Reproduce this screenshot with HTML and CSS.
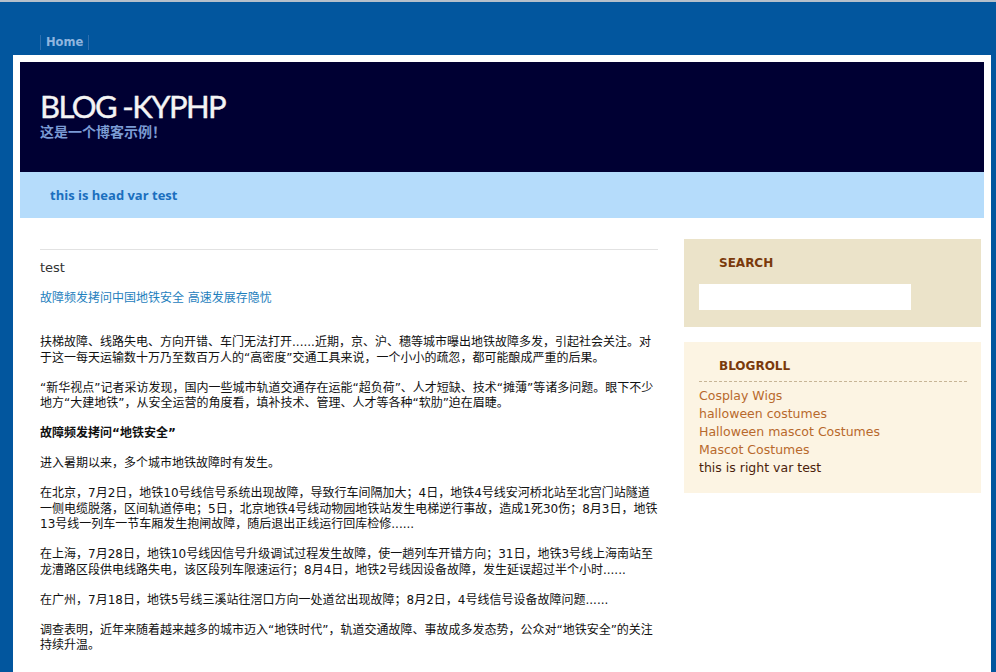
FILE: index.html
```html
<!DOCTYPE html>
<html lang="zh-CN">
<head>
<meta charset="utf-8">
<title>BLOG -KYPHP</title>
<link rel="stylesheet" href="styles.css">
</head>
<body>
<div class="nav">
  <a class="nav-item" href="#">Home</a>
</div>
<div class="wrapper">
  <div class="header">
    <h1 class="site-title">BLOG -KYPHP</h1>
    <div class="site-desc">这是一个博客示例！</div>
  </div>
  <div class="headbar">this is head var test</div>
  <div class="content">
    <div class="main">
      <div class="post-title">test</div>
      <a class="post-link" href="#">故障频发拷问中国地铁安全 高速发展存隐忧</a>
      <div class="post-body">
        <p>扶梯故障、线路失电、方向开错、车门无法打开......近期，京、沪、穗等城市曝出地铁故障多发，引起社会关注。对于这一每天运输数十万乃至数百万人的“高密度”交通工具来说，一个小小的疏忽，都可能酿成严重的后果。</p>
        <p>“新华视点”记者采访发现，国内一些城市轨道交通存在运能“超负荷”、人才短缺、技术“摊薄”等诸多问题。眼下不少地方“大建地铁”，从安全运营的角度看，填补技术、管理、人才等各种“软肋”迫在眉睫。</p>
        <p><strong>故障频发拷问“地铁安全”</strong></p>
        <p>进入暑期以来，多个城市地铁故障时有发生。</p>
        <p>在北京，7月2日，地铁10号线信号系统出现故障，导致行车间隔加大；4日，地铁4号线安河桥北站至北宫门站隧道一侧电缆脱落，区间轨道停电；5日，北京地铁4号线动物园地铁站发生电梯逆行事故，造成1死30伤；8月3日，地铁13号线一列车一节车厢发生抱闸故障，随后退出正线运行回库检修......</p>
        <p>在上海，7月28日，地铁10号线因信号升级调试过程发生故障，使一趟列车开错方向；31日，地铁3号线上海南站至龙漕路区段供电线路失电，该区段列车限速运行；8月4日，地铁2号线因设备故障，发生延误超过半个小时......</p>
        <p>在广州，7月18日，地铁5号线三溪站往滘口方向一处道岔出现故障；8月2日，4号线信号设备故障问题......</p>
        <p>调查表明，近年来随着越来越多的城市迈入“地铁时代”，轨道交通故障、事故成多发态势，公众对“地铁安全”的关注持续升温。</p>
      </div>
    </div>
    <div class="sidebar">
      <div class="widget widget-search">
        <h2 class="widget-title">SEARCH</h2>
        <input class="search-input" type="text" aria-label="search">
      </div>
      <div class="widget widget-blogroll">
        <h2 class="widget-title">BLOGROLL</h2>
        <ul class="blogroll">
          <li><a href="#">Cosplay Wigs</a></li>
          <li><a href="#">halloween costumes</a></li>
          <li><a href="#">Halloween mascot Costumes</a></li>
          <li><a href="#">Mascot Costumes</a></li>
          <li class="plain">this is right var test</li>
        </ul>
      </div>
    </div>
  </div>
</div>
</body>
</html>
```
FILE: styles.css
```css
html, body {
  margin: 0;
  padding: 0;
}
body {
  background: #02569e;
  border-top: 2px solid #b4bfcb;
  font-family: "DejaVu Sans", "Noto Sans CJK SC", sans-serif;
  color: #222;
  height: 100vh;
  box-sizing: border-box;
  display: flex;
  flex-direction: column;
  overflow: hidden;
}
.nav {
  display: flex;
  flex: none;
  padding: 33px 0 0 40px;
  height: 20px;
}
.nav-item {
  display: block;
  height: 15px;
  line-height: 15px;
  padding: 0 5px;
  border-left: 1px solid #2f6fae;
  border-right: 1px solid #2f6fae;
  color: #8fb5df;
  font-family: "DejaVu Sans", sans-serif;
  font-size: 11.5px;
  font-weight: bold;
  text-decoration: none;
}
.wrapper {
  flex: 1;
  min-height: 0;
  margin: 0 5px 0 13px;
  background: #fff;
  padding: 7px 7px 0 7px;
  overflow: hidden;
}
.header {
  background: #000033;
  height: 110px;
  padding: 0 20px;
  box-sizing: border-box;
}
.site-title {
  margin: 0;
  padding-top: 29px;
  font-family: "Lato", sans-serif;
  font-weight: normal;
  font-size: 31px;
  line-height: 31px;
  color: #f4f4f4;
  letter-spacing: -1.6px;
  -webkit-text-stroke: 0.4px #f4f4f4;
}
.site-desc {
  margin-top: 2px;
  font-family: "Noto Sans CJK SC", sans-serif;
  font-weight: bold;
  font-size: 14px;
  line-height: 15px;
  color: #7b9bd4;
}
.headbar {
  background: #b5dcfb;
  height: 46px;
  line-height: 46px;
  padding-left: 30px;
  font-family: "Open Sans", sans-serif;
  font-weight: bold;
  font-size: 13px;
  color: #1b6fbe;
}
.content {
  display: flex;
  align-items: flex-start;
  padding: 21px 3px 0 20px;
  gap: 26px;
}
.main {
  width: 618px;
  flex: none;
  padding-top: 10px;
}
.main .post-title {
  border-top: 1px solid #e2e2e2;
  padding-top: 10px;
  font-size: 13px;
  line-height: 16px;
  color: #333;
}
.post-link {
  display: block;
  margin-top: 14px;
  font-size: 12px;
  line-height: 16px;
  color: #1e80bd;
  text-decoration: none;
}
.post-body {
  padding-top: 29px;
}
.post-body p {
  margin: 0 0 14.4px 0;
  font-size: 12px;
  line-height: 15.6px;
  color: #111;
}
.post-body p:last-child {
  margin-bottom: 0;
}
.post-body strong {
  font-weight: bold;
}
.sidebar {
  width: 297px;
  flex: none;
  display: flex;
  flex-direction: column;
  gap: 15px;
}
.widget {
  padding: 15px 14px 17px 15px;
}
.widget-search {
  background: #ebe3c9;
}
.widget-blogroll {
  background: #fcf4e3;
  padding-bottom: 16px;
}
.widget-title {
  margin: 0;
  padding-left: 20px;
  font-family: "DejaVu Sans", sans-serif;
  font-size: 12px;
  font-weight: bold;
  line-height: 18px;
  color: #7a3a0c;
}
.search-input {
  display: block;
  margin-top: 12px;
  width: 212px;
  height: 26px;
  box-sizing: border-box;
  border: 0;
  background: #fff;
  padding: 0;
}
.widget-blogroll .widget-title {
  padding-bottom: 6px;
  border-bottom: 1px dashed #c7b597;
}
.blogroll {
  list-style: none;
  margin: 5px 0 0 0;
  padding: 0;
  font-family: "DejaVu Sans", sans-serif;
  font-size: 12.5px;
  line-height: 18px;
}
.blogroll a {
  color: #b8692c;
  text-decoration: none;
}
.blogroll .plain {
  color: #4b1e0b;
}
```
